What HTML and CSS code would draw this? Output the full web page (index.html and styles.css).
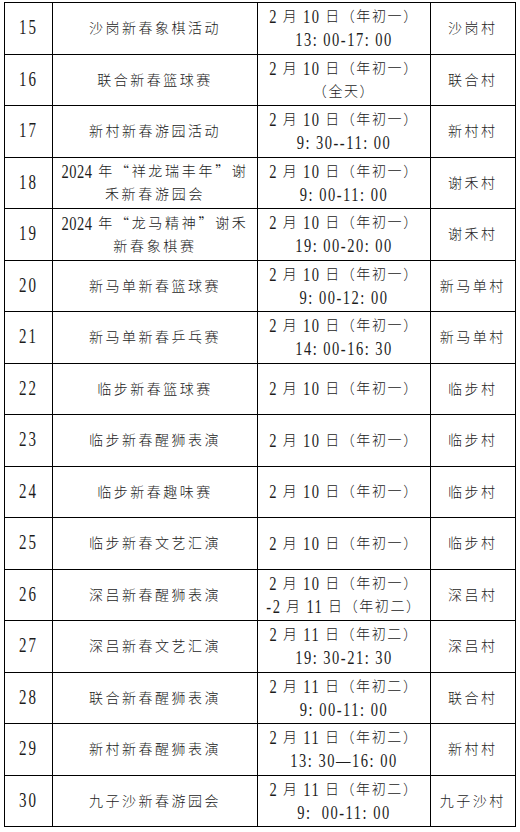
FILE: index.html
```html
<!DOCTYPE html>
<html lang="zh-CN">
<head>
<meta charset="utf-8">
<title>新春活动安排</title>
<link rel="stylesheet" href="styles.css">
</head>
<body>
<div class="table">
  <div class="c num"><span class="d">15</span></div>
  <div class="c name"><p>沙岗新春象棋活动</p></div>
  <div class="c date"><p><span class="d">2</span> 月 <span class="d">10</span> 日（年初一）<br><span class="d">13: 00-17: 00</span></p></div>
  <div class="c vil"><p>沙岗村</p></div>

  <div class="c num"><span class="d">16</span></div>
  <div class="c name"><p>联合新春篮球赛</p></div>
  <div class="c date"><p><span class="d">2</span> 月 <span class="d">10</span> 日（年初一）<br>（全天）</p></div>
  <div class="c vil"><p>联合村</p></div>

  <div class="c num"><span class="d">17</span></div>
  <div class="c name"><p>新村新春游园活动</p></div>
  <div class="c date"><p><span class="d">2</span> 月 <span class="d">10</span> 日（年初一）<br><span class="d">9: 30--11: 00</span></p></div>
  <div class="c vil"><p>新村村</p></div>

  <div class="c num"><span class="d">18</span></div>
  <div class="c name two"><p><span class="d dn">2024</span> 年“祥龙瑞丰年”谢<br>禾新春游园会</p></div>
  <div class="c date"><p><span class="d">2</span> 月 <span class="d">10</span> 日（年初一）<br><span class="d">9: 00-11: 00</span></p></div>
  <div class="c vil"><p>谢禾村</p></div>

  <div class="c num"><span class="d">19</span></div>
  <div class="c name two"><p><span class="d dn">2024</span> 年“龙马精神”谢禾<br>新春象棋赛</p></div>
  <div class="c date"><p><span class="d">2</span> 月 <span class="d">10</span> 日（年初一）<br><span class="d">19: 00-20: 00</span></p></div>
  <div class="c vil"><p>谢禾村</p></div>

  <div class="c num"><span class="d">20</span></div>
  <div class="c name"><p>新马单新春篮球赛</p></div>
  <div class="c date"><p><span class="d">2</span> 月 <span class="d">10</span> 日（年初一）<br><span class="d">9: 00-12: 00</span></p></div>
  <div class="c vil"><p>新马单村</p></div>

  <div class="c num"><span class="d">21</span></div>
  <div class="c name"><p>新马单新春乒乓赛</p></div>
  <div class="c date"><p><span class="d">2</span> 月 <span class="d">10</span> 日（年初一）<br><span class="d">14: 00-16: 30</span></p></div>
  <div class="c vil"><p>新马单村</p></div>

  <div class="c num"><span class="d">22</span></div>
  <div class="c name"><p>临步新春篮球赛</p></div>
  <div class="c date"><p><span class="d">2</span> 月 <span class="d">10</span> 日（年初一）</p></div>
  <div class="c vil"><p>临步村</p></div>

  <div class="c num"><span class="d">23</span></div>
  <div class="c name"><p>临步新春醒狮表演</p></div>
  <div class="c date"><p><span class="d">2</span> 月 <span class="d">10</span> 日（年初一）</p></div>
  <div class="c vil"><p>临步村</p></div>

  <div class="c num"><span class="d">24</span></div>
  <div class="c name"><p>临步新春趣味赛</p></div>
  <div class="c date"><p><span class="d">2</span> 月 <span class="d">10</span> 日（年初一）</p></div>
  <div class="c vil"><p>临步村</p></div>

  <div class="c num"><span class="d">25</span></div>
  <div class="c name"><p>临步新春文艺汇演</p></div>
  <div class="c date"><p><span class="d">2</span> 月 <span class="d">10</span> 日（年初一）</p></div>
  <div class="c vil"><p>临步村</p></div>

  <div class="c num"><span class="d">26</span></div>
  <div class="c name"><p>深吕新春醒狮表演</p></div>
  <div class="c date"><p><span class="d">2</span> 月 <span class="d">10</span> 日（年初一）<br><span class="d">-2</span> 月 <span class="d">11</span> 日（年初二）</p></div>
  <div class="c vil"><p>深吕村</p></div>

  <div class="c num"><span class="d">27</span></div>
  <div class="c name"><p>深吕新春文艺汇演</p></div>
  <div class="c date"><p><span class="d">2</span> 月 <span class="d">11</span> 日（年初二）<br><span class="d">19: 30-21: 30</span></p></div>
  <div class="c vil"><p>深吕村</p></div>

  <div class="c num"><span class="d">28</span></div>
  <div class="c name"><p>联合新春醒狮表演</p></div>
  <div class="c date"><p><span class="d">2</span> 月 <span class="d">11</span> 日（年初二）<br><span class="d">9: 00-11: 00</span></p></div>
  <div class="c vil"><p>联合村</p></div>

  <div class="c num"><span class="d">29</span></div>
  <div class="c name"><p>新村新春醒狮表演</p></div>
  <div class="c date"><p><span class="d">2</span> 月 <span class="d">11</span> 日（年初二）<br><span class="d">13: 30—16: 00</span></p></div>
  <div class="c vil"><p>新村村</p></div>

  <div class="c num"><span class="d">30</span></div>
  <div class="c name"><p>九子沙新春游园会</p></div>
  <div class="c date"><p><span class="d">2</span> 月 <span class="d">11</span> 日（年初二）<br><span class="d">9:&nbsp; 00-11: 00</span></p></div>
  <div class="c vil"><p>九子沙村</p></div>
</div>
</body>
</html>
```
FILE: styles.css
```css
html, body {
  margin: 0;
  padding: 0;
  background: #fff;
}

body {
  font-family: "Noto Sans CJK SC", "Liberation Serif", sans-serif;
  font-weight: 300;
  font-size: 14px;
  color: #1c1c1c;
}

.table {
  display: grid;
  grid-template-columns: 48px 205px 173px 84.5px;
  grid-auto-rows: 51.5px;
  width: max-content;
  margin: 2px 0 0 4px;
  border-left: 1.5px solid #000;
  border-top: 1.5px solid #000;
}

.c {
  border-right: 1.5px solid #000;
  border-bottom: 1.5px solid #000;
  display: flex;
  align-items: center;
  justify-content: center;
  text-align: center;
  line-height: 22px;
  padding-bottom: 2px;
  box-sizing: border-box;
}

.c p {
  margin: 0;
  white-space: nowrap;
}

.name,
.vil {
  letter-spacing: 2.5px;
}

.name.two {
  letter-spacing: 2.7px;
}

.date {
  letter-spacing: 1.6px;
}

.d {
  font-family: "Liberation Serif", serif;
  font-weight: 400;
  display: inline-block;
  transform: scaleY(1.35);
  letter-spacing: 1.5px;
  font-size: 14.5px;
  white-space: pre;
}

.num .d {
  letter-spacing: 2px;
  font-size: 15px;
}

.dn {
  letter-spacing: 0.5px;
}
```
